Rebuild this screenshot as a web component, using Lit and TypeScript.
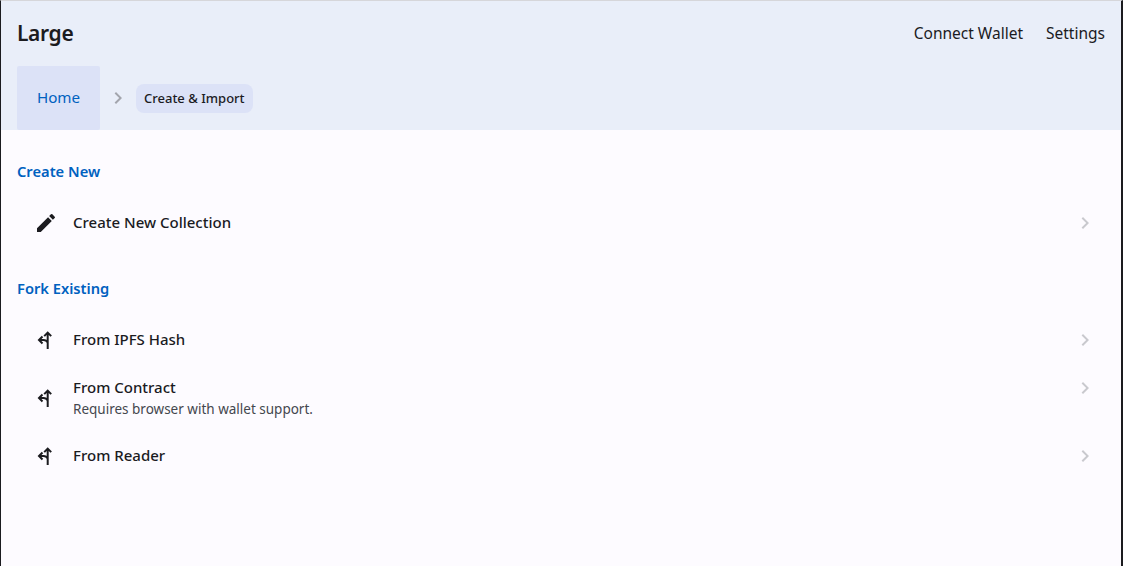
import { LitElement, html, css } from 'lit';
import { customElement } from 'lit/decorators.js';

const pencil = html`<svg class="icon" viewBox="0 0 24 24"><path d="M3 17.25V21h3.75L17.81 9.94l-3.75-3.75L3 17.25zM20.71 7.04a1 1 0 0 0 0-1.41l-2.34-2.34a1 1 0 0 0-1.41 0l-1.83 1.83 3.75 3.75 1.83-1.83z"/></svg>`;
const fork = html`<svg class="icon fork" viewBox="0 0 24 24"><path d="M13.7 21V4.6M10.2 8.1l3.5-3.5 3.5 3.5M13.7 14.5c-.9-1.6-2.5-2.5-4.2-2.5H5.5M8.5 8.5 5 12l3.5 3.5"/></svg>`;
const chevron = html`<svg class="chevron" viewBox="0 0 24 24"><path d="M8.6 16.6 13.2 12 8.6 7.4 10 6l6 6-6 6z"/></svg>`;

const SECTIONS = [
  { title: 'Create New', items: [{ icon: pencil, label: 'Create New Collection' }] },
  {
    title: 'Fork Existing',
    items: [
      { icon: fork, label: 'From IPFS Hash' },
      { icon: fork, label: 'From Contract', sub: 'Requires browser with wallet support.' },
      { icon: fork, label: 'From Reader' },
    ],
  },
];

@customElement('app-root')
export class AppRoot extends LitElement {
  static styles = css`
    :host {
      display: block;
      height: 566px;
      box-sizing: border-box;
      overflow: hidden;
      background: #fdfbff;
      border-left: 1px solid #1b1b1f;
      border-right: 2px solid #1b1b1f;
      border-top: 1px solid #d6d6da;
      font-family: 'Noto Sans', sans-serif;
      color: #1b1b1f;
    }
    .header {
      background: #e9eef9;
      height: 129px;
      padding: 0 16px;
      box-sizing: border-box;
    }
    .top {
      height: 65px;
      padding-bottom: 2px;
      box-sizing: border-box;
      display: flex;
      align-items: center;
      justify-content: space-between;
    }
    .title {
      font-size: 21px;
      font-weight: 600;
      letter-spacing: -0.35px;
    }
    .actions {
      display: flex;
      gap: 23px;
      font-size: 15.5px;
    }
    .crumbs {
      display: flex;
      align-items: center;
      height: 64px;
    }
    .home {
      width: 83px;
      height: 64px;
      padding-bottom: 2px;
      box-sizing: border-box;
      display: flex;
      align-items: center;
      justify-content: center;
      background: #dce2f7;
      border-radius: 2px;
      color: #0061c0;
      font-size: 15.2px;
    }
    .sep {
      width: 36px;
      display: flex;
      justify-content: center;
    }
    .sep svg {
      fill: #a3a5ad;
    }
    .chip {
      height: 29px;
      padding: 0 8px;
      display: flex;
      align-items: center;
      border-radius: 8px;
      background: #dce2f7;
      font-size: 13px;
      font-weight: 500;
    }
    .section-title {
      margin: 0;
      padding: 0 16px;
      height: 24px;
      line-height: 24px;
      color: #0061c0;
      font-size: 14.7px;
      font-weight: 600;
    }
    .content {
      padding-top: 29px;
    }
    .list {
      padding: 11px 0 26px;
    }
    .row {
      display: flex;
      align-items: center;
      height: 56px;
      padding: 0 24px 0 32px;
    }
    .row.two {
      height: 60px;
    }
    .icon {
      width: 24px;
      height: 24px;
      fill: #1b1b1f;
      margin: 2px 15px 0 1px;
      flex: none;
    }
    .icon.fork {
      fill: none;
      stroke: #1b1b1f;
      stroke-width: 2;
    }
    .text {
      flex: 1;
    }
    .two .text {
      padding-top: 3px;
    }
    .label {
      font-size: 15px;
      font-weight: 500;
      line-height: 20px;
    }
    .sub {
      margin-top: 1px;
      font-size: 13.5px;
      line-height: 22px;
      color: #44474e;
    }
    .chevron {
      width: 24px;
      height: 24px;
      fill: #c9c9ce;
      flex: none;
      margin-top: 1px;
    }
    .sep .chevron {
      margin-top: 0;
    }
    .two .chevron {
      align-self: flex-start;
      margin-top: 9px;
    }
  `;

  render() {
    return html`
      <div class="header">
        <div class="top">
          <div class="title">Large</div>
          <div class="actions"><span>Connect Wallet</span><span>Settings</span></div>
        </div>
        <div class="crumbs">
          <div class="home">Home</div>
          <div class="sep">${chevron}</div>
          <div class="chip">Create &amp; Import</div>
        </div>
      </div>
      <div class="content">
        ${SECTIONS.map(
          (section) => html`
            <h2 class="section-title">${section.title}</h2>
            <div class="list">
              ${section.items.map(
                (item: any) => html`
                  <div class="row ${item.sub ? 'two' : ''}">
                    ${item.icon}
                    <div class="text">
                      <div class="label">${item.label}</div>
                      ${item.sub ? html`<div class="sub">${item.sub}</div>` : ''}
                    </div>
                    ${chevron}
                  </div>
                `
              )}
            </div>
          `
        )}
      </div>
    `;
  }
}
